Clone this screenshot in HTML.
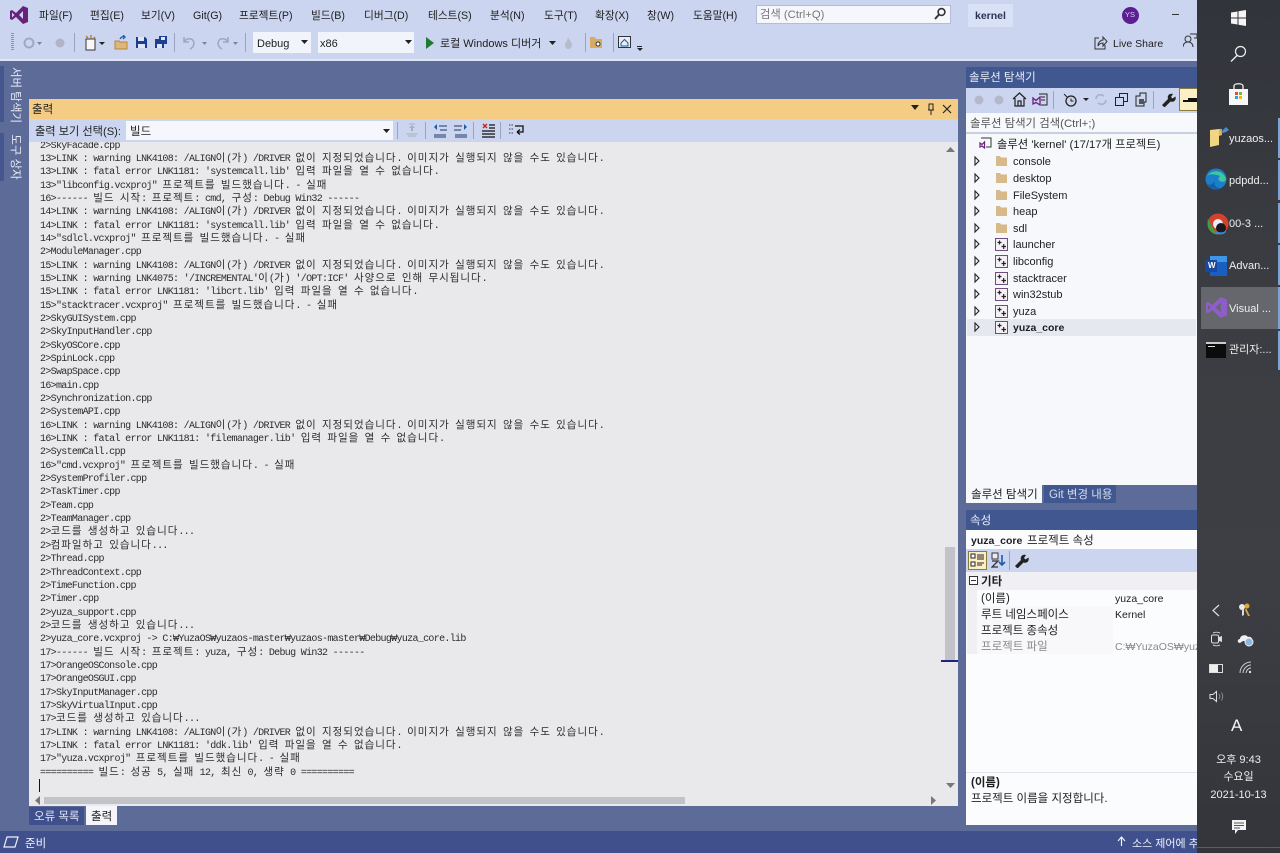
<!DOCTYPE html>
<html lang="ko"><head><meta charset="utf-8"><title>kernel - Visual Studio</title>
<style>
html,body{margin:0;padding:0}
body{width:1280px;height:853px;overflow:hidden;position:relative;background:#5d6b99;font-family:"Liberation Sans","Noto Sans CJK KR",sans-serif;font-size:11px;color:#1e1e1e}
div,span,svg{position:absolute}
.t{white-space:nowrap;line-height:14px}
b,i{position:static}
.m{top:9px;font-size:10.7px;color:#1e1e1e}
.r{font-size:11px;left:1013px}
.s{left:1229px;color:#f0f0f0;font-size:11px}
#out{left:0;top:-2.5px;margin:0;position:absolute;padding-left:11px;font-family:"Liberation Mono",monospace;font-size:10px;letter-spacing:-.68px;line-height:13.34px;color:#2c2c2c;white-space:pre}
#out b{font-family:"Noto Sans CJK KR",sans-serif;font-weight:400;font-size:10.5px;letter-spacing:.98px;line-height:0}
.bar{background:#ccd5f0}
.sep{width:1px;background:#9aa3c0}
</style></head><body>

<!-- top bars -->
<div class="bar" style="left:0;top:0;width:1197px;height:60px"></div>
<div style="left:0;top:59px;width:1197px;height:2px;background:#dfe5f6"></div>
<svg style="left:9px;top:5px" width="20" height="20" viewBox="0 0 20 20"><path d="M14 1l5 2v14l-5 2-7-7-4 3-2-1V6l2-1 4 3zM3 7.5v5L5.5 10zM14 6l-4 4 4 4z" fill="#68217a" fill-rule="evenodd"/></svg>
<span class="t m" style="left:39px">파일(F)</span>
<span class="t m" style="left:90px">편집(E)</span>
<span class="t m" style="left:141px">보기(V)</span>
<span class="t m" style="left:193px">Git(G)</span>
<span class="t m" style="left:239px">프로젝트(P)</span>
<span class="t m" style="left:311px">빌드(B)</span>
<span class="t m" style="left:364px">디버그(D)</span>
<span class="t m" style="left:428px">테스트(S)</span>
<span class="t m" style="left:490px">분석(N)</span>
<span class="t m" style="left:544px">도구(T)</span>
<span class="t m" style="left:595px">확장(X)</span>
<span class="t m" style="left:647px">창(W)</span>
<span class="t m" style="left:693px">도움말(H)</span>
<div style="left:756px;top:5px;width:193px;height:17px;background:#f6f7fc;border:1px solid #b4bcd6"></div>
<span class="t" style="left:760px;top:8px;font-size:11.3px;color:#777">검색 (Ctrl+Q)</span>
<svg style="left:933px;top:7px" width="14" height="14" viewBox="0 0 14 14"><circle cx="8.5" cy="5" r="3.4" fill="none" stroke="#333" stroke-width="1.6"/><path d="M6 7.5L2 12" stroke="#333" stroke-width="2"/></svg>
<div style="left:968px;top:4px;width:45px;height:23px;background:#d9e1f6"></div>
<span class="t" style="left:975px;top:9px;font-size:10.5px;font-weight:700;color:#2b3350">kernel</span>
<div style="left:1122px;top:7px;width:17px;height:17px;border-radius:50%;background:#5b1f92"></div>
<span class="t" style="left:1125px;top:8px;font-size:7.5px;color:#dcd0ee">YS</span>
<div style="left:1172px;top:14px;width:7px;height:1px;background:#333"></div>

<!-- toolbar -->
<div style="left:11px;top:33px;width:3px;height:17px;background:repeating-linear-gradient(#8a93b5 0 1px,transparent 1px 2px)"></div>
<svg style="left:22px;top:36px" width="50" height="14" viewBox="0 0 50 14"><circle cx="7" cy="7" r="4.5" fill="none" stroke="#a3a9bd" stroke-width="2"/><path d="M15 6h5l-2.500 3z" fill="#7d849c"/><circle cx="38" cy="7" r="4.500" fill="#b0b5c5"/></svg>
<div class="sep" style="left:74px;top:33px;height:19px"></div>
<svg style="left:83px;top:34px" width="24" height="18" viewBox="0 0 24 18"><rect x="3" y="5" width="9" height="11" fill="#f7f7f7" stroke="#333"/><path d="M3 2l2 2M8 1v3M12 3l-2 2" stroke="#c27d1a" stroke-width="1.400"/><path d="M16 8h6l-3 3z" fill="#222"/></svg>
<svg style="left:114px;top:35px" width="14" height="15" viewBox="0 0 14 15"><path d="M1 6h4l1 1h7v7H1z" fill="#dcb67a" stroke="#b8872f"/><path d="M6 4c1-2 3-3 5-2M9 0l2 2-2 2" stroke="#1f5aa8" fill="none" stroke-width="1.300"/></svg>
<svg style="left:135px;top:36px" width="13" height="13" viewBox="0 0 13 13"><path d="M1 1h9l2 2v9H1z" fill="#1b3f94"/><rect x="3" y="1" width="6" height="4" fill="#dfe6f8"/><rect x="3" y="8" width="7" height="4" fill="#dfe6f8"/></svg>
<svg style="left:154px;top:35px" width="14" height="14" viewBox="0 0 14 14"><path d="M5 1h8v8H10v4H1V4h4z" fill="#1b3f94"/><rect x="7" y="2" width="4" height="3" fill="#dfe6f8"/><rect x="3" y="9" width="5" height="4" fill="#dfe6f8"/></svg>
<div class="sep" style="left:174px;top:33px;height:19px"></div>
<svg style="left:181px;top:35px" width="58" height="15" viewBox="0 0 58 15"><path d="M3 2v5h5M3 7c2-4 9-5 10 1 0 3-2 5-4 6" fill="none" stroke="#a0a6ba" stroke-width="1.500"/><path d="M21 7h5l-2.500 3z" fill="#7d849c"/><path d="M47 2v5h-5M47 7c-2-4-9-5-10 1 0 3 2 5 4 6" fill="none" stroke="#a0a6ba" stroke-width="1.500"/><path d="M52 7h5l-2.500 3z" fill="#7d849c"/></svg>
<div class="sep" style="left:245px;top:33px;height:19px"></div>
<div style="left:253px;top:32px;width:58px;height:21px;background:#f2f4fb"></div>
<span class="t" style="left:257px;top:37px;font-size:11px">Debug</span>
<svg style="left:301px;top:40px" width="7" height="5"><path d="M0 0h7L3.500 4z" fill="#222"/></svg>
<div style="left:318px;top:32px;width:96px;height:21px;background:#f2f4fb"></div>
<span class="t" style="left:320px;top:37px;font-size:11px">x86</span>
<svg style="left:405px;top:40px" width="7" height="5"><path d="M0 0h7L3.500 4z" fill="#222"/></svg>
<svg style="left:425px;top:37px" width="10" height="12"><path d="M1 0l8 6-8 6z" fill="#1f7a32"/></svg>
<span class="t" style="left:440px;top:37px;font-size:11px">로컬 Windows 디버거</span>
<svg style="left:549px;top:41px" width="7" height="5"><path d="M0 0h7L3.500 4z" fill="#222"/></svg>
<svg style="left:564px;top:37px" width="9" height="12"><path d="M4 0c1 3 4 5 4 8s-2 4-4 4-3-2-3-4 2-3 3-8z" fill="#b6bccd"/></svg>
<div class="sep" style="left:585px;top:33px;height:19px"></div>
<svg style="left:589px;top:36px" width="14" height="13"><path d="M1 1h5l1 2h6v9H1z" fill="#d9ab62"/><circle cx="9" cy="8" r="2" fill="#fff" stroke="#234" /></svg>
<div class="sep" style="left:613px;top:33px;height:19px"></div>
<svg style="left:618px;top:36px" width="13" height="13"><rect x=".5" y=".5" width="12" height="11" fill="#e8edf9" stroke="#333"/><path d="M3 7l3.500-3.500L10 7v3H3z" fill="none" stroke="#1c5da8"/></svg>
<div style="left:637px;top:46px;width:5px;height:1px;background:#222"></div>
<svg style="left:637px;top:48px" width="6" height="4"><path d="M0 0h6L3 3z" fill="#222"/></svg>
<svg style="left:1094px;top:36px" width="14" height="14" viewBox="0 0 14 14"><path d="M5 2H1v11h10V9" fill="none" stroke="#333"/><path d="M4 10c0-4 3-6 5-6V1l4 4.500L9 10V7c-2 0-4 1-5 3z" fill="none" stroke="#333"/></svg>
<span class="t" style="left:1113px;top:37px;font-size:10.5px">Live Share</span>
<svg style="left:1183px;top:33px" width="14" height="16" viewBox="0 0 14 16"><circle cx="5" cy="6" r="3" fill="none" stroke="#333"/><path d="M0 14c0-3 2-5 5-5s5 2 5 5" fill="none" stroke="#333"/><path d="M7 1h7v4h-3" fill="none" stroke="#333"/></svg>

<!-- left strip -->
<div style="left:0;top:66px;width:4px;height:56px;background:#45568f"></div>
<div style="left:0;top:133px;width:4px;height:48px;background:#45568f"></div>
<span class="t" style="left:-14px;top:88px;width:58px;font-size:11.5px;color:#e6eaf6;transform:rotate(90deg);text-align:center">서버 탐색기</span>
<span class="t" style="left:-10px;top:150px;width:50px;font-size:11.5px;color:#e6eaf6;transform:rotate(90deg);text-align:center">도구 상자</span>

<!-- output panel -->
<div style="left:29px;top:99px;width:929px;height:20px;background:#f5cc84"></div>
<span class="t" style="left:32px;top:103px;font-size:11.5px">출력</span>
<svg style="left:911px;top:105px" width="8" height="6"><path d="M0 0h8L4 5z" fill="#222"/></svg>
<svg style="left:927px;top:103px" width="8" height="12" viewBox="0 0 8 12"><path d="M2 1h4v6H2zM1 7h6M4 7v5" fill="none" stroke="#222"/></svg>
<svg style="left:942px;top:104px" width="10" height="10"><path d="M1 1l8 8M9 1l-8 8" stroke="#222" stroke-width="1.200"/></svg>
<div class="bar" style="left:29px;top:119px;width:929px;height:23px"></div>
<span class="t" style="left:35px;top:125px;font-size:11.2px">출력 보기 선택(S):</span>
<div style="left:126px;top:121px;width:267px;height:19px;background:#f6f7fc"></div>
<span class="t" style="left:130px;top:125px;font-size:11.5px">빌드</span>
<svg style="left:383px;top:129px" width="7" height="5"><path d="M0 0h7L3.500 4z" fill="#222"/></svg>
<div class="sep" style="left:397px;top:122px;height:17px"></div>
<svg style="left:405px;top:122px" width="14" height="16" viewBox="0 0 14 16"><path d="M4 2h6M1 12h12M3 14h8" stroke="#a8aebf"/><path d="M7 3l-3 3h2v3h2V6h2z" fill="#a8aebf"/></svg>
<div class="sep" style="left:425px;top:122px;height:17px"></div>
<svg style="left:433px;top:123px" width="14" height="15" viewBox="0 0 14 15"><path d="M6 3h8M7 7h7M1 12h12M1 14h12" stroke="#1f3864"/><path d="M1 4l3-3v6z" fill="#1c5da8"/></svg>
<svg style="left:454px;top:123px" width="14" height="15" viewBox="0 0 14 15"><path d="M0 3h8M0 7h7M1 12h12M1 14h12" stroke="#1f3864"/><path d="M13 4l-3-3v6z" fill="#1c5da8"/></svg>
<div class="sep" style="left:473px;top:122px;height:17px"></div>
<svg style="left:482px;top:123px" width="13" height="15" viewBox="0 0 13 15"><path d="M1 1l4 4M5 1L1 5" stroke="#c3261f" stroke-width="1.400"/><path d="M7 2h6M7 5h6M0 8h13M0 11h13M0 14h13" stroke="#111" stroke-width="1.300"/></svg>
<div class="sep" style="left:500px;top:122px;height:17px"></div>
<svg style="left:509px;top:123px" width="15" height="14" viewBox="0 0 15 14"><path d="M0 2h4M0 6h4M0 10h4" stroke="#444" stroke-dasharray="1.500 1"/><path d="M6 3h8v6H8M8 9l3-2.500M8 9l3 2.500" fill="none" stroke="#111" stroke-width="1.300"/></svg>

<div id="text" style="left:29px;top:142px;width:929px;height:664px;background:#e9e9ec;overflow:hidden">
<pre id="out">2&gt;SkyFacade.cpp
13&gt;LINK : warning LNK4108: /ALIGN<b>이</b>(<b>가</b>) /DRIVER <b>없이</b> <b>지정되었습니다</b>. <b>이미지가</b> <b>실행되지</b> <b>않을</b> <b>수도</b> <b>있습니다</b>.
13&gt;LINK : fatal error LNK1181: 'systemcall.lib' <b>입력</b> <b>파일을</b> <b>열</b> <b>수</b> <b>없습니다</b>.
13&gt;"libconfig.vcxproj" <b>프로젝트를</b> <b>빌드했습니다</b>. - <b>실패</b>
16&gt;------ <b>빌드</b> <b>시작</b>: <b>프로젝트</b>: cmd, <b>구성</b>: Debug Win32 ------
14&gt;LINK : warning LNK4108: /ALIGN<b>이</b>(<b>가</b>) /DRIVER <b>없이</b> <b>지정되었습니다</b>. <b>이미지가</b> <b>실행되지</b> <b>않을</b> <b>수도</b> <b>있습니다</b>.
14&gt;LINK : fatal error LNK1181: 'systemcall.lib' <b>입력</b> <b>파일을</b> <b>열</b> <b>수</b> <b>없습니다</b>.
14&gt;"sdlcl.vcxproj" <b>프로젝트를</b> <b>빌드했습니다</b>. - <b>실패</b>
2&gt;ModuleManager.cpp
15&gt;LINK : warning LNK4108: /ALIGN<b>이</b>(<b>가</b>) /DRIVER <b>없이</b> <b>지정되었습니다</b>. <b>이미지가</b> <b>실행되지</b> <b>않을</b> <b>수도</b> <b>있습니다</b>.
15&gt;LINK : warning LNK4075: '/INCREMENTAL'<b>이</b>(<b>가</b>) '/OPT:ICF' <b>사양으로</b> <b>인해</b> <b>무시됩니다</b>.
15&gt;LINK : fatal error LNK1181: 'libcrt.lib' <b>입력</b> <b>파일을</b> <b>열</b> <b>수</b> <b>없습니다</b>.
15&gt;"stacktracer.vcxproj" <b>프로젝트를</b> <b>빌드했습니다</b>. - <b>실패</b>
2&gt;SkyGUISystem.cpp
2&gt;SkyInputHandler.cpp
2&gt;SkyOSCore.cpp
2&gt;SpinLock.cpp
2&gt;SwapSpace.cpp
16&gt;main.cpp
2&gt;Synchronization.cpp
2&gt;SystemAPI.cpp
16&gt;LINK : warning LNK4108: /ALIGN<b>이</b>(<b>가</b>) /DRIVER <b>없이</b> <b>지정되었습니다</b>. <b>이미지가</b> <b>실행되지</b> <b>않을</b> <b>수도</b> <b>있습니다</b>.
16&gt;LINK : fatal error LNK1181: 'filemanager.lib' <b>입력</b> <b>파일을</b> <b>열</b> <b>수</b> <b>없습니다</b>.
2&gt;SystemCall.cpp
16&gt;"cmd.vcxproj" <b>프로젝트를</b> <b>빌드했습니다</b>. - <b>실패</b>
2&gt;SystemProfiler.cpp
2&gt;TaskTimer.cpp
2&gt;Team.cpp
2&gt;TeamManager.cpp
2&gt;<b>코드를</b> <b>생성하고</b> <b>있습니다</b>...
2&gt;<b>컴파일하고</b> <b>있습니다</b>...
2&gt;Thread.cpp
2&gt;ThreadContext.cpp
2&gt;TimeFunction.cpp
2&gt;Timer.cpp
2&gt;yuza_support.cpp
2&gt;<b>코드를</b> <b>생성하고</b> <b>있습니다</b>...
2&gt;yuza_core.vcxproj -&gt; C:₩YuzaOS₩yuzaos-master₩yuzaos-master₩Debug₩yuza_core.lib
17&gt;------ <b>빌드</b> <b>시작</b>: <b>프로젝트</b>: yuza, <b>구성</b>: Debug Win32 ------
17&gt;OrangeOSConsole.cpp
17&gt;OrangeOSGUI.cpp
17&gt;SkyInputManager.cpp
17&gt;SkyVirtualInput.cpp
17&gt;<b>코드를</b> <b>생성하고</b> <b>있습니다</b>...
17&gt;LINK : warning LNK4108: /ALIGN<b>이</b>(<b>가</b>) /DRIVER <b>없이</b> <b>지정되었습니다</b>. <b>이미지가</b> <b>실행되지</b> <b>않을</b> <b>수도</b> <b>있습니다</b>.
17&gt;LINK : fatal error LNK1181: 'ddk.lib' <b>입력</b> <b>파일을</b> <b>열</b> <b>수</b> <b>없습니다</b>.
17&gt;"yuza.vcxproj" <b>프로젝트를</b> <b>빌드했습니다</b>. - <b>실패</b>
========== <b>빌드</b>: <b>성공</b> 5, <b>실패</b> 12, <b>최신</b> 0, <b>생략</b> 0 ==========</pre>
<div style="left:10px;top:637px;width:1px;height:13px;background:#111"></div>
<!-- scrollbars -->
<svg style="left:917px;top:5px" width="9" height="6"><path d="M0 5l4.500-5L9 5z" fill="#777"/></svg>
<svg style="left:917px;top:641px" width="9" height="6"><path d="M0 0h9L4.500 5z" fill="#777"/></svg>
<div style="left:916px;top:405px;width:10px;height:113px;background:#c2c3c9"></div>
<div style="left:912px;top:518px;width:17px;height:2px;background:#1c2680"></div>
<svg style="left:6px;top:654px" width="6" height="9"><path d="M5 0v9L0 4.500z" fill="#777"/></svg>
<svg style="left:902px;top:654px" width="6" height="9"><path d="M0 0v9l5-4.500z" fill="#777"/></svg>
<div style="left:15px;top:655px;width:641px;height:7px;background:#c2c3c9"></div>
</div>

<!-- bottom tabs -->
<div style="left:29px;top:807px;width:55px;height:18px;background:#40508d"></div>
<span class="t" style="left:34px;top:810px;font-size:11.5px;color:#e2e7f5">오류 목록</span>
<div style="left:86px;top:806px;width:31px;height:19px;background:#f5f6fb"></div>
<span class="t" style="left:91px;top:810px;font-size:11.5px">출력</span>

<!-- solution explorer -->
<div style="left:966px;top:67px;width:231px;height:21px;background:#40588f"></div>
<span class="t" style="left:969px;top:71px;font-size:11.5px;color:#e6ebf8">솔루션 탐색기</span>
<div class="bar" style="left:966px;top:88px;width:231px;height:25px"></div>
<svg style="left:972px;top:93px" width="36" height="14"><circle cx="7" cy="7" r="4.500" fill="#b3b9cb"/><circle cx="27" cy="7" r="4.500" fill="#b3b9cb"/></svg>
<svg style="left:1012px;top:92px" width="15" height="15" viewBox="0 0 15 15"><path d="M1 7l6.500-6L14 7M3 6v8h9V6M6 14V9h3v5" fill="none" stroke="#222" stroke-width="1.200"/></svg>
<svg style="left:1032px;top:92px" width="16" height="15" viewBox="0 0 16 15"><path d="M1 6l3 2.500L8 5v8L4 10.500 1 12z" fill="none" stroke="#68217a" stroke-width="1.300"/><path d="M7 2h8v11H9M9 5h4M9 8h4" fill="none" stroke="#222"/></svg>
<div class="sep" style="left:1053px;top:91px;height:18px"></div>
<svg style="left:1063px;top:92px" width="30" height="16" viewBox="0 0 30 16"><circle cx="8" cy="9" r="5" fill="none" stroke="#222" stroke-width="1.300"/><path d="M8 6.500V9h2.500M1 2l3 3" stroke="#222" fill="none"/><path d="M20 6h6l-3 3z" fill="#222"/></svg>
<svg style="left:1094px;top:92px" width="14" height="15" viewBox="0 0 14 15"><path d="M2 7c0-3 3-5 6-4l2 1M12 8c0 3-3 5-6 4l-2-1" fill="none" stroke="#aeb4c6" stroke-width="1.800"/></svg>
<svg style="left:1115px;top:93px" width="13" height="13"><rect x="4.500" y=".5" width="8" height="8" fill="none" stroke="#222"/><rect x=".5" y="4.500" width="8" height="8" fill="#ccd5f0" stroke="#222"/></svg>
<svg style="left:1134px;top:92px" width="14" height="15" viewBox="0 0 14 15"><path d="M2 4h4V1h6v9h-2v4H2z" fill="none" stroke="#222"/><path d="M5 7h5v5H5z" fill="#555"/></svg>
<div class="sep" style="left:1153px;top:91px;height:18px"></div>
<svg style="left:1161px;top:92px" width="15" height="15" viewBox="0 0 15 15"><path d="M1 13l6-6c-1-3 1-6 5-5l-2 3 1.500 1.500 3-2c1 4-2 6-5 5l-6 6z" fill="#222"/></svg>
<div style="left:1179px;top:88px;width:18px;height:23px;background:#fbefc5;border:1px solid #8b7a3f;border-right:0;box-sizing:border-box"></div>
<div style="left:1183px;top:100px;width:14px;height:2px;background:#111"></div>
<div style="left:1188px;top:98px;width:9px;height:2px;background:#111"></div>
<div style="left:966px;top:113px;width:231px;height:19px;background:#f8f9fd"></div>
<span class="t" style="left:970px;top:117px;font-size:11.4px;color:#555">솔루션 탐색기 검색(Ctrl+;)</span>
<div style="left:966px;top:132px;width:231px;height:2px;background:#c9cfe0"></div>
<div style="left:966px;top:134px;width:231px;height:351px;background:#f6f8fc"></div>
<svg style="left:979px;top:137px" width="13" height="14" viewBox="0 0 13 14"><path d="M2 1h10v9H7" fill="none" stroke="#333"/><path d="M1 6l2 1.500L5.500 5v6L3 9 1 10z" fill="none" stroke="#68217a" stroke-width="1.200"/></svg>
<span class="t" style="left:997px;top:138px;font-size:11.3px">솔루션 'kernel' (17/17개 프로젝트)</span>
<div style="left:967px;top:319px;width:229px;height:17px;background:#e6e8f0"></div>

<svg style="left:974px;top:152px" width="36" height="182" viewBox="0 0 36 182">
<defs>
<path id="ar" d="M1 0v8l4-4z" fill="#f6f8fc" stroke="#222" stroke-width="1.100"/>
<path id="fo" d="M1 1h4l1 1.500h6V11H1z" fill="#d8b989"/>
<g id="pr"><rect x=".5" y=".5" width="12" height="12" fill="#f4f0f6" stroke="#6b4f7a"/><path d="M2.500 4.500h4M4.500 2.500v4M6.500 8.500h4.500M8.700 6v5" stroke="#222" stroke-width="1.200"/></g>
</defs>
<use href="#ar" x="0" y="5"/><use href="#ar" x="0" y="22"/><use href="#ar" x="0" y="39"/><use href="#ar" x="0" y="55"/><use href="#ar" x="0" y="72"/><use href="#ar" x="0" y="88"/><use href="#ar" x="0" y="105"/><use href="#ar" x="0" y="122"/><use href="#ar" x="0" y="138"/><use href="#ar" x="0" y="155"/><use href="#ar" x="0" y="171"/>
<use href="#fo" x="21" y="3"/><use href="#fo" x="21" y="20"/><use href="#fo" x="21" y="37"/><use href="#fo" x="21" y="53"/><use href="#fo" x="21" y="70"/>
<use href="#pr" x="21" y="86"/><use href="#pr" x="21" y="103"/><use href="#pr" x="21" y="120"/><use href="#pr" x="21" y="136"/><use href="#pr" x="21" y="153"/><use href="#pr" x="21" y="169"/>
</svg>
<span class="t r" style="top:155px">console</span>
<span class="t r" style="top:172px">desktop</span>
<span class="t r" style="top:189px">FileSystem</span>
<span class="t r" style="top:205px">heap</span>
<span class="t r" style="top:222px">sdl</span>
<span class="t r" style="top:238px">launcher</span>
<span class="t r" style="top:255px">libconfig</span>
<span class="t r" style="top:272px">stacktracer</span>
<span class="t r" style="top:288px">win32stub</span>
<span class="t r" style="top:305px">yuza</span>
<span class="t r" style="top:321px;font-weight:700;font-size:10.5px">yuza_core</span>

<!-- tool tabs -->
<div style="left:966px;top:485px;width:76px;height:18px;background:#f6f8fc"></div>
<span class="t" style="left:971px;top:488px;font-size:11.5px">솔루션 탐색기</span>
<div style="left:1044px;top:485px;width:72px;height:18px;background:#40588f"></div>
<span class="t" style="left:1049px;top:488px;font-size:11.5px;color:#d5dcef">Git 변경 내용</span>

<!-- properties -->
<div style="left:966px;top:510px;width:231px;height:20px;background:#40588f"></div>
<span class="t" style="left:970px;top:514px;font-size:11.5px;color:#e6ebf8">속성</span>
<div style="left:966px;top:530px;width:231px;height:295px;background:#fbfcfe"></div>
<span class="t" style="left:971px;top:534px;font-size:10.5px;font-weight:700">yuza_core</span>
<span class="t" style="left:1027px;top:534px;font-size:11.5px">프로젝트 속성</span>
<div class="bar" style="left:966px;top:549px;width:231px;height:23px"></div>
<div style="left:968px;top:551px;width:19px;height:19px;background:#fbefc5;border:1px solid #8b7a3f;box-sizing:border-box"></div>
<svg style="left:970px;top:553px" width="15" height="15" viewBox="0 0 15 15"><rect x="1" y="1" width="4" height="4" fill="#fff" stroke="#222"/><rect x="1" y="9" width="4" height="4" fill="#fff" stroke="#222"/><path d="M7 2h7M7 4h7M7 6h7M7 10h7M7 12h5" stroke="#222"/></svg>
<svg style="left:991px;top:552px" width="15" height="16" viewBox="0 0 15 16"><rect x="1" y="1" width="6" height="6" fill="#e8ecf8" stroke="#333"/><path d="M1 9h6L1 15h6" fill="none" stroke="#333" stroke-width="1.300"/><path d="M11 3v10M8 10l3 3 3-3" fill="none" stroke="#1c5da8" stroke-width="1.600"/></svg>
<div class="sep" style="left:1009px;top:551px;height:19px"></div>
<svg style="left:1014px;top:553px" width="15" height="15" viewBox="0 0 15 15"><path d="M1 13l6-6c-1-3 1-6 5-5l-2 3 1.500 1.500 3-2c1 4-2 6-5 5l-6 6z" fill="#222"/></svg>
<div style="left:967px;top:572px;width:230px;height:18px;background:#f0f0f4"></div>
<div style="left:967px;top:590px;width:10px;height:64px;background:#f0f0f4"></div>
<div style="left:977px;top:606px;width:136px;height:48px;background:#f8f8fb"></div>
<svg style="left:969px;top:576px" width="10" height="10"><rect x=".5" y=".5" width="8" height="8" fill="#fff" stroke="#333"/><path d="M2 4.500h5" stroke="#333"/></svg>
<span class="t" style="left:981px;top:575px;font-size:11.5px;font-weight:700">기타</span>
<span class="t" style="left:981px;top:592px;font-size:11.5px">(이름)</span>
<span class="t" style="left:1115px;top:592px;font-size:10.5px">yuza_core</span>
<span class="t" style="left:981px;top:608px;font-size:11.5px">루트 네임스페이스</span>
<span class="t" style="left:1115px;top:608px;font-size:10.5px">Kernel</span>
<span class="t" style="left:981px;top:624px;font-size:11.5px">프로젝트 종속성</span>
<span class="t" style="left:981px;top:640px;font-size:11.5px;color:#8a8a8a">프로젝트 파일</span>
<div style="left:1115px;top:640px;width:82px;height:14px;overflow:hidden"><span class="t" style="left:0;top:0;font-size:10.5px;color:#8a8a8a">C:₩YuzaOS₩yuzaos-master</span></div>
<div style="left:966px;top:772px;width:231px;height:1px;background:#e2e4ec"></div>
<span class="t" style="left:971px;top:776px;font-size:11.5px;font-weight:700">(이름)</span>
<span class="t" style="left:971px;top:792px;font-size:11.5px">프로젝트 이름을 지정합니다.</span>

<!-- status bar -->
<div style="left:0;top:831px;width:1197px;height:22px;background:#40508d"></div>
<svg style="left:3px;top:836px" width="16" height="12"><path d="M4 1h11l-3 10H1z" fill="none" stroke="#eef1fa" stroke-width="1.200"/></svg>
<span class="t" style="left:25px;top:837px;font-size:11.5px;color:#eef1fa">준비</span>
<svg style="left:1117px;top:836px" width="9" height="11"><path d="M4.500 1v9M1 5l3.500-4L8 5" fill="none" stroke="#eef1fa" stroke-width="1.200"/></svg>
<span class="t" style="left:1132px;top:837px;font-size:11px;color:#eef1fa">소스 제어에 추</span>

<!-- taskbar -->
<div style="left:1197px;top:0;width:83px;height:853px;background:linear-gradient(#31343a,#3a3c41 30%,#3d3f44 65%,#33353a)"></div>
<div style="left:1197px;top:847px;width:83px;height:1px;background:#5a5c61"></div>
<div style="left:1278px;top:118px;width:2px;height:40px;background:#7aa5d8"></div>
<div style="left:1278px;top:160px;width:2px;height:40px;background:#7aa5d8"></div>
<div style="left:1278px;top:203px;width:2px;height:40px;background:#7aa5d8"></div>
<div style="left:1278px;top:245px;width:2px;height:40px;background:#7aa5d8"></div>
<div style="left:1201px;top:287px;width:79px;height:42px;background:#65676c"></div>
<div style="left:1278px;top:287px;width:2px;height:42px;background:#7aa5d8"></div>
<div style="left:1278px;top:331px;width:2px;height:39px;background:#7aa5d8"></div>
<svg style="left:1231px;top:10px" width="15" height="16" viewBox="0 0 15 16"><path d="M0 2.500l6.500-1V7.500H0zM7.500 1.300L15 0v7.500H7.500zM0 8.500h6.500v6L0 13.500zM7.500 8.500H15V16l-7.500-1.300z" fill="#f5f5f5"/></svg>
<svg style="left:1230px;top:45px" width="17" height="17" viewBox="0 0 17 17"><circle cx="10.500" cy="6.500" r="5" fill="none" stroke="#eee" stroke-width="1.200"/><path d="M7 10.500L1 16.500" stroke="#eee" stroke-width="1.300"/></svg>
<svg style="left:1228px;top:83px" width="21" height="23" viewBox="0 0 21 23"><path d="M1 6h19v16H1z" fill="#f7f7f7"/><path d="M6 6V3c0-3 9-3 9 0v3" fill="none" stroke="#f0f0f0" stroke-width="1.300"/><rect x="7" y="9" width="3" height="3" fill="#e2502a"/><rect x="11" y="9" width="3" height="3" fill="#7cb82f"/><rect x="7" y="13" width="3" height="3" fill="#2aa3e0"/><rect x="11" y="13" width="3" height="3" fill="#f5b800"/></svg>

<svg style="left:1208px;top:126px" width="22" height="22" viewBox="0 0 22 22"><path d="M2 4l9-1v16l-9 2z" fill="#f2d582"/><path d="M11 3h3v6l-3 1z" fill="#e3b64f"/><path d="M12 2l2 3 4-4 3 3-3 2-3 1-2-2z" fill="#4b8bd0"/></svg>
<span class="t s" style="top:132px">yuzaos...</span>
<svg style="left:1205px;top:168px" width="22" height="22" viewBox="0 0 22 22"><circle cx="11" cy="11" r="10.500" fill="#1d7fc9"/><path d="M2 9C4 2 18 0 21 11c0 3-5 4-7 1s4-4-2-5S3 6 2 9z" fill="#3fc8a0"/><path d="M10 13c-2 4 2 8 7 7-6 3-13 0-15-5 2 3 5 2 8-2z" fill="#105fa8"/></svg>
<span class="t s" style="top:174px">pdpdd...</span>
<svg style="left:1207px;top:213px" width="22" height="22" viewBox="0 0 22 22"><circle cx="11" cy="11" r="10.500" fill="#d4412c"/><path d="M1 6l6 11 4 4.500C5 21.500.500 16 .500 11c0-2 0-3 .5-5z" fill="#3f9e47"/><circle cx="11" cy="11" r="5" fill="#e8eef8"/><circle cx="14" cy="15" r="5" fill="#1a1a1e"/><path d="M9 18c3 2 8 2 10-1v2c-3 3-7 3-10 1z" fill="#2f8fe0"/></svg>
<span class="t s" style="top:217px">00-3 ...</span>
<svg style="left:1205px;top:256px" width="22" height="20" viewBox="0 0 22 20"><rect x="5" y="0" width="17" height="20" fill="#1a5fc0"/><rect x="5" y="0" width="17" height="6" fill="#3f95e6"/><rect x="0" y="4" width="12" height="12" fill="#1848a0"/></svg>
<span class="t" style="left:1208px;top:259px;font-size:8px;font-weight:700;color:#fff">W</span>
<span class="t s" style="top:259px">Advan...</span>
<svg style="left:1206px;top:297px" width="21" height="21" viewBox="0 0 20 20"><path d="M14 0l6 2.500v15L14 20 6 12.500l-4 3-2-1V5.500l2-1 4 3zM2 7.500v5L4.500 10zM14 5.500L9 10l5 4.500z" fill="#8d5ec7" fill-rule="evenodd"/></svg>
<span class="t s" style="top:302px">Visual ...</span>
<div style="left:1206px;top:342px;width:20px;height:16px;background:#0c0c0c;border-top:2px solid #ccc;box-sizing:border-box"></div>
<div style="left:1208px;top:346px;width:7px;height:1px;background:#ddd"></div>
<span class="t s" style="top:343px">관리자:...</span>

<svg style="left:1212px;top:604px" width="8" height="13"><path d="M7 1L1 6.500 7 12" fill="none" stroke="#ddd" stroke-width="1.200"/></svg>
<svg style="left:1238px;top:603px" width="14" height="14" viewBox="0 0 14 14"><circle cx="4" cy="4" r="3" fill="#e8e8e8"/><circle cx="9" cy="3" r="2.500" fill="#e0a63a"/><path d="M8 5l4 8-2 0-3-6z" fill="#e0a63a"/><path d="M4 6l0 7 2-1V6z" fill="#ddd"/></svg>
<svg style="left:1210px;top:631px" width="13" height="16" viewBox="0 0 13 16"><path d="M3 2c2-1 5-1 7 0M3 14c2 1 5 1 7 0" stroke="#ccc" fill="none"/><rect x="1.500" y="4" width="7" height="8" rx="1.500" fill="none" stroke="#ddd"/><path d="M9 6l3-1v6l-3-1z" fill="#ddd"/></svg>
<svg style="left:1237px;top:633px" width="17" height="14" viewBox="0 0 17 14"><path d="M3 10C0 10 0 6 3 6c0-4 6-5 8-2 3-1 5 2 4 4H6z" fill="#f0f0f0"/><circle cx="12" cy="9" r="4" fill="#8cb9e4" stroke="#eee"/></svg>
<svg style="left:1209px;top:664px" width="15" height="9"><rect x=".5" y=".5" width="13" height="8" fill="none" stroke="#ddd"/><rect x="1" y="1" width="8" height="7" fill="#eee"/></svg>
<svg style="left:1239px;top:661px" width="13" height="13" viewBox="0 0 13 13"><path d="M1 12C1 6 6 1 12 1M4 12c0-4 4-8 8-8M7 12c0-2 2-5 5-5" fill="none" stroke="#ccc"/><circle cx="11" cy="11" r="1.200" fill="#ddd"/></svg>
<svg style="left:1209px;top:690px" width="15" height="13" viewBox="0 0 15 13"><path d="M1 4.500h3L7.500 1.500v10L4 8.500H1z" fill="none" stroke="#ddd"/><path d="M10 4c1 1.500 1 3.500 0 5M12.500 2.500c1.500 2.500 1.500 5.500 0 8" fill="none" stroke="#888"/></svg>
<span class="t" style="left:1231px;top:717px;font-size:17px;color:#f5f5f5;line-height:18px">A</span>
<span class="t" style="left:1197px;width:83px;top:753px;text-align:center;font-size:11px;color:#eee">오후 9:43</span>
<span class="t" style="left:1197px;width:83px;top:770px;text-align:center;font-size:11px;color:#eee">수요일</span>
<span class="t" style="left:1197px;width:83px;top:788px;text-align:center;font-size:11px;color:#eee">2021-10-13</span>
<svg style="left:1231px;top:819px" width="16" height="16" viewBox="0 0 16 16"><path d="M1 1h14v10H7l-3 4v-4H1z" fill="#f4f4f4"/><path d="M3 4h10M3 6.500h10M3 9h6" stroke="#555"/></svg>
</body></html>
